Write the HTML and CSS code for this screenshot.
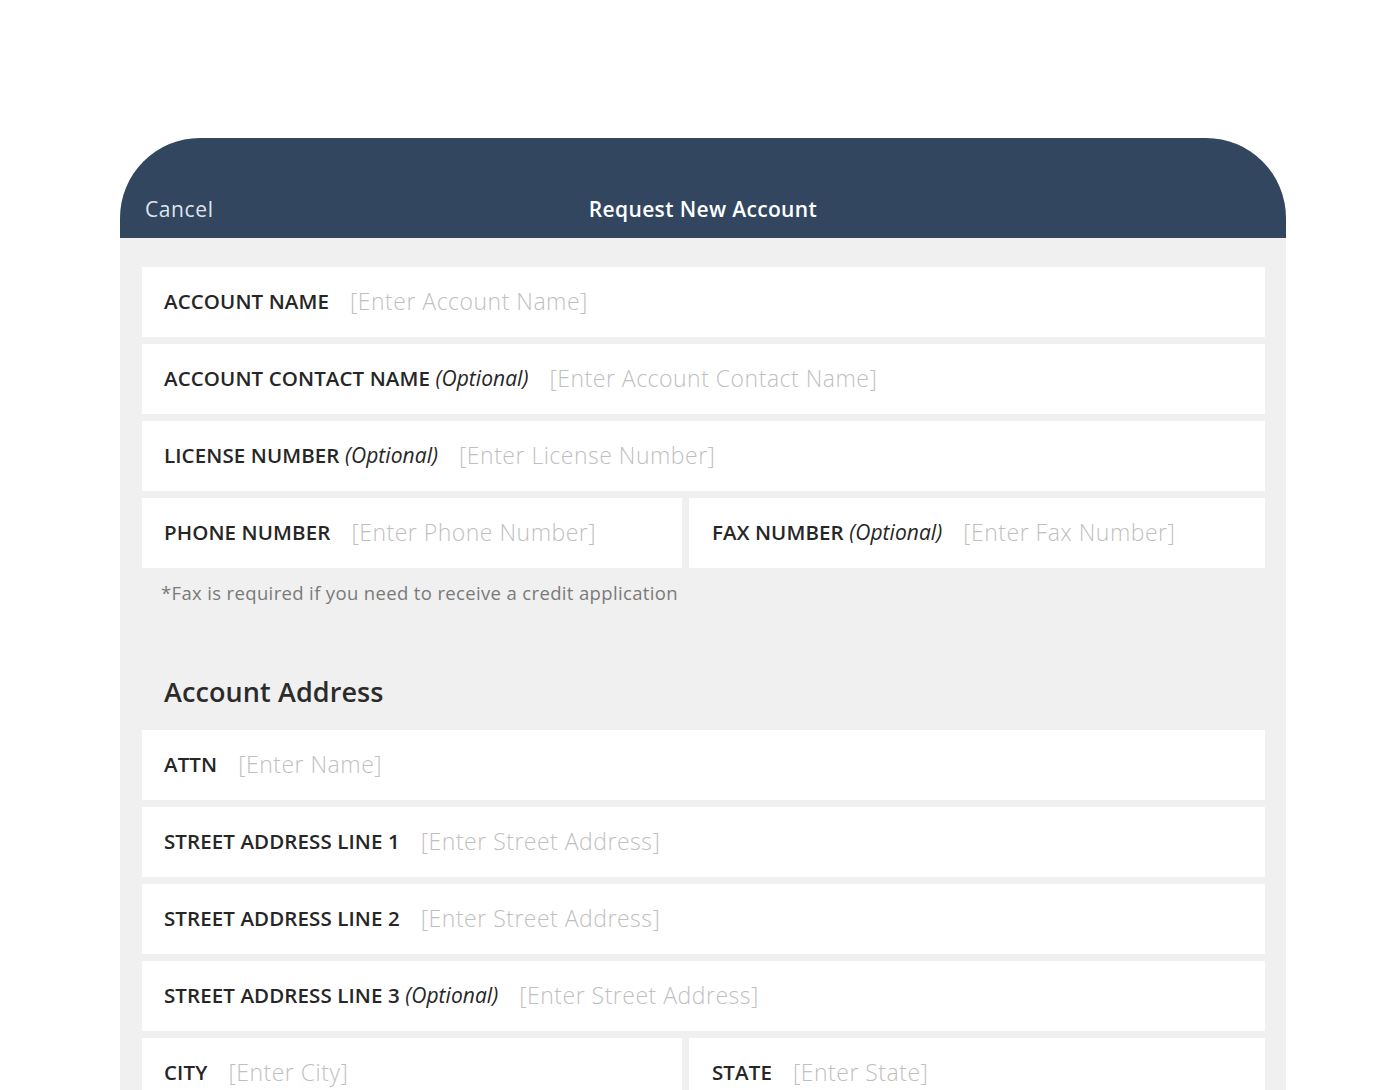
FILE: index.html
```html
<!DOCTYPE html>
<html lang="en">
<head>
<meta charset="utf-8">
<title>Request New Account</title>
<link rel="stylesheet" href="styles.css">
</head>
<body>
<div class="device">
  <header class="topbar">
    <span class="cancel">Cancel</span>
    <span class="title">Request New Account</span>
  </header>
  <main class="content">
    <div class="rows">
      <div class="field"><span class="label">ACCOUNT NAME</span><span class="ph">[Enter Account Name]</span></div>
      <div class="field"><span class="label">ACCOUNT CONTACT NAME <em>(Optional)</em></span><span class="ph">[Enter Account Contact Name]</span></div>
      <div class="field"><span class="label">LICENSE NUMBER <em>(Optional)</em></span><span class="ph">[Enter License Number]</span></div>
      <div class="split">
        <div class="field"><span class="label">PHONE NUMBER</span><span class="ph">[Enter Phone Number]</span></div>
        <div class="field right"><span class="label">FAX NUMBER <em>(Optional)</em></span><span class="ph">[Enter Fax Number]</span></div>
      </div>
    </div>
    <p class="note">*Fax is required if you need to receive a credit application</p>
    <h2 class="section">Account Address</h2>
    <div class="rows">
      <div class="field"><span class="label">ATTN</span><span class="ph">[Enter Name]</span></div>
      <div class="field"><span class="label">STREET ADDRESS LINE 1</span><span class="ph">[Enter Street Address]</span></div>
      <div class="field"><span class="label">STREET ADDRESS LINE 2</span><span class="ph">[Enter Street Address]</span></div>
      <div class="field"><span class="label">STREET ADDRESS LINE 3 <em>(Optional)</em></span><span class="ph">[Enter Street Address]</span></div>
      <div class="split">
        <div class="field"><span class="label">CITY</span><span class="ph">[Enter City]</span></div>
        <div class="field right"><span class="label">STATE</span><span class="ph">[Enter State]</span></div>
      </div>
    </div>
  </main>
</div>
</body>
</html>
```

FILE: styles.css
```css
html, body {
  margin: 0;
  padding: 0;
  background: #ffffff;
  font-family: "Open Sans", "Noto Sans", sans-serif;
}

.device {
  margin: 138px 0 0 120px;
  width: 1166px;
  background: #f0f0f0;
  border-radius: 80px 80px 0 0;
  overflow: hidden;
}

.topbar {
  height: 100px;
  background: #32465f;
  position: relative;
  display: flex;
  align-items: flex-end;
  padding: 0 25px 15px;
  box-sizing: border-box;
}

.cancel {
  color: #dfe5ec;
  font-size: 21px;
  letter-spacing: 0.6px;
  line-height: 28px;
}

.title {
  position: absolute;
  left: 0;
  right: 0;
  bottom: 15px;
  text-align: center;
  color: #ffffff;
  font-size: 21px;
  font-weight: 600;
  letter-spacing: 0.35px;
  line-height: 28px;
}

.content {
  padding: 29px 21px 40px 22px;
}

.rows {
  display: flex;
  flex-direction: column;
  gap: 7px;
}

.split {
  display: grid;
  grid-template-columns: 540px 1fr;
  gap: 7px;
}

.field {
  height: 70px;
  background: #ffffff;
  display: flex;
  align-items: center;
  padding-left: 22px;
  gap: 21px;
  white-space: nowrap;
}

.field.right {
  padding-left: 23px;
}

.label {
  font-size: 20.5px;
  font-weight: 600;
  color: #262626;
  letter-spacing: 0.1px;
  padding-bottom: 2px;
}

.label em {
  font-weight: 400;
  font-style: italic;
  font-size: 21px;
  letter-spacing: 0.05px;
}

.ph {
  font-size: 23px;
  font-weight: 300;
  color: #bfbfbf;
  letter-spacing: 0.5px;
  padding-bottom: 2px;
}

.note {
  margin: 12px 0 0 19px;
  font-size: 18.5px;
  line-height: 26px;
  color: #7a7a7a;
  letter-spacing: 0.35px;
}

.section {
  margin: 68px 0 20px 0;
  padding-left: 22px;
  font-size: 27px;
  line-height: 36px;
  font-weight: 600;
  color: #2b2b2b;
  letter-spacing: 0.1px;
}
```
